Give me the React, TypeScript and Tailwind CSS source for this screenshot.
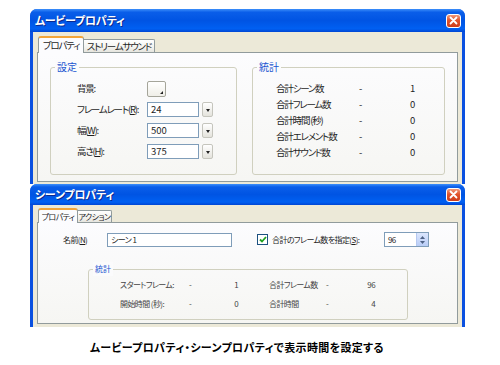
import React from 'react';

const ui = "font-['Noto_Sans_CJK_JP',sans-serif] [font-feature-settings:'palt'] whitespace-nowrap";

const TitleBar: React.FC<{ title: string; h: string }> = ({ title, h }) => (
  <div
    className={`${h} flex items-center justify-between pl-[5px] pr-[4px] bg-[linear-gradient(180deg,#3d8ffa_0%,#0a5ee9_14%,#0054e3_50%,#0060f2_86%,#0046d3_100%)]`}
  >
    <span className="text-white font-bold text-[11px] tracking-[-0.2px] leading-none [text-shadow:1px_1px_0_#0b2a8f]">{title}</span>
    <div className="w-[15px] h-[14px] rounded-[3px] border border-white bg-[linear-gradient(180deg,#f09a7a_0%,#e2542c_45%,#cc3c1a_100%)] flex items-center justify-center">
      <svg width="9" height="9" viewBox="0 0 9 9">
        <path d="M1.5 1.5 L7.5 7.5 M7.5 1.5 L1.5 7.5" stroke="#fff" strokeWidth="1.8" strokeLinecap="round" />
      </svg>
    </div>
  </div>
);

const Tab: React.FC<{ label: string; selected?: boolean; w: string; h: string }> = ({ label, selected, w, h }) =>
  selected ? (
    <div
      className={`${w} ${h} relative z-10 -mb-px border border-b-0 border-[#919b9c] border-t-2 border-t-[#f2a53a] rounded-t-[3px] bg-[#fcfcfe] flex items-center justify-center`}
    >
      {label}
    </div>
  ) : (
    <div
      className={`${w} ${h} border border-b-0 border-l-0 border-[#919b9c] rounded-tr-[2px] bg-[linear-gradient(180deg,#ffffff_0%,#f3f3ef_60%,#e6e5de_100%)] flex items-center justify-center`}
    >
      {label}
    </div>
  );

const Group: React.FC<{ title: string; className: string; titleSize: string; children: React.ReactNode }> = ({
  title,
  className,
  titleSize,
  children,
}) => (
  <div className={`relative border border-[#d0d0bf] rounded-[3px] ${className}`}>
    <span className={`absolute -top-[8px] left-[4px] px-[2px] bg-[#fbfbfc] text-[#1a55d0] leading-[14px] tracking-normal ${titleSize}`}>
      {title}
    </span>
    {children}
  </div>
);

const Dropdown: React.FC = () => (
  <div className="w-[11px] h-[15px] ml-[3px] border border-[#c5c5bd] rounded-[2px] bg-[linear-gradient(180deg,#ffffff,#e4e3dc)] flex items-end justify-center pb-[4px]">
    <svg width="4" height="3" viewBox="0 0 4 3">
      <path d="M0 0 H4 L2 3 Z" fill="#222" />
    </svg>
  </div>
);

const NumInput: React.FC<{ value: string }> = ({ value }) => (
  <div className="flex items-center">
    <div className="w-[52px] h-[15px] border border-[#7f9db9] bg-white pl-[3px] leading-[13px] tracking-normal">{value}</div>
    <Dropdown />
  </div>
);

const U: React.FC<{ c: string }> = ({ c }) => <span className="underline underline-offset-1">{c}</span>;

const App: React.FC = () => {
  const stats = [
    ['合計シーン数', '1'],
    ['合計フレーム数', '0'],
    ['合計時間 (秒)', '0'],
    ['合計エレメント数', '0'],
    ['合計サウンド数', '0'],
  ];

  return (
    <div className={`w-[500px] h-[365px] bg-white overflow-hidden text-[#1e1e1e] ${ui}`}>
      {/* ムービープロパティ */}
      <div className="ml-[30px] mt-[9px] w-[435px] h-[175px] rounded-t-[7px] overflow-hidden bg-[#0a50e0] flex flex-col">
        <TitleBar title="ムービープロパティ" h="h-[23px]" />
        <div className="flex-1 mx-[3px] bg-[#ece9d8] pt-[4px] px-[4px] flex flex-col text-[9.5px] tracking-[-1.2px]">
          <div className="flex items-end ml-[1px]">
            <Tab label="プロパティ" selected w="w-[46px]" h="h-[17px]" />
            <Tab label="ストリームサウンド" w="w-[71px]" h="h-[13px]" />
          </div>
          <div className="h-[130px] border border-[#919b9c] bg-[linear-gradient(180deg,#fcfcfe,#f6f6f3)] flex pt-[14px]">
            <Group title="設定" titleSize="text-[10px]" className="ml-[12px] w-[187px] h-[108px] pt-[10px]">
              {[
                ['背景:', null],
                [<>フレームレート(<U c="R" />):</>, '24'],
                [<>幅(<U c="W" />):</>, '500'],
                [<>高さ(<U c="H" />):</>, '375'],
              ].map(([label, val], i) => (
                <div key={i} className="h-[21px] flex items-center">
                  <div className="w-[96px] pl-[26px]">{label}</div>
                  {val === null ? (
                    <div className="w-[19px] h-[16px] border border-[#a5a59a] rounded-[2px] bg-[linear-gradient(180deg,#ffffff,#f0efe8)] flex items-end justify-end p-[2px]">
                      <svg width="3" height="3" viewBox="0 0 3 3">
                        <path d="M3 0 V3 H0 Z" fill="#222" />
                      </svg>
                    </div>
                  ) : (
                    <NumInput value={val as string} />
                  )}
                </div>
              ))}
            </Group>
            <Group title="統計" titleSize="text-[10px]" className="ml-[15px] w-[193px] h-[108px] pt-[12px]">
              {stats.map(([k, v]) => (
                <div key={k} className="h-[16px] flex items-center">
                  <div className="w-[106px] pl-[23px]">{k}</div>
                  <div className="w-[47px]">-</div>
                  <div className="w-[12px] text-center">{v}</div>
                </div>
              ))}
            </Group>
          </div>
        </div>
      </div>

      {/* シーンプロパティ */}
      <div className="ml-[30px] w-[435px] h-[143px] rounded-t-[7px] overflow-hidden bg-[#0a50e0] flex flex-col">
        <TitleBar title="シーンプロパティ" h="h-[21px]" />
        <div className="flex-1 mx-[3px] bg-[#ece9d8] pt-[3px] px-[4px] pb-[3px] flex flex-col text-[8px] tracking-[-0.6px]">
          <div className="flex items-end ml-[1px]">
            <Tab label="プロパティ" selected w="w-[40px]" h="h-[15px]" />
            <Tab label="アクション" w="w-[34px]" h="h-[12px]" />
          </div>
          <div className="flex-1 border border-[#919b9c] bg-[linear-gradient(180deg,#fcfcfe,#f6f6f3)] pt-[9px]">
            <div className="h-[15px] flex items-center">
              <div className="w-[69px] pl-[25px]">
                名前(<U c="N" />)
              </div>
              <div className="w-[125px] h-[14px] border border-[#7f9db9] bg-white pl-[3px] leading-[12px]">シーン 1</div>
              <div className="ml-[25px] w-[11px] h-[11px] border border-[#1c5180] bg-white flex items-center justify-center">
                <svg width="8" height="7" viewBox="0 0 8 7">
                  <path d="M1 3.5 L3 5.5 L7 1" stroke="#21a121" strokeWidth="1.8" fill="none" />
                </svg>
              </div>
              <div className="ml-[4px] w-[112px]">
                合計のフレーム数を指定(<U c="S" />):
              </div>
              <div className="w-[45px] h-[15px] border border-[#7f9db9] bg-white flex">
                <div className="flex-1 pl-[3px] leading-[13px]">96</div>
                <div className="w-[12px] bg-[linear-gradient(180deg,#dbe6fd,#b9cdf7)] border-l border-[#b5c8f0] flex flex-col items-center justify-center gap-[2px]">
                  <svg width="5" height="3" viewBox="0 0 5 3">
                    <path d="M0 3 H5 L2.5 0 Z" fill="#4d6185" />
                  </svg>
                  <svg width="5" height="3" viewBox="0 0 5 3">
                    <path d="M0 0 H5 L2.5 3 Z" fill="#4d6185" />
                  </svg>
                </div>
              </div>
            </div>
            <Group title="統計" titleSize="text-[8px]" className="mt-[22px] ml-[50px] w-[320px] h-[51px] pt-[5px] text-[#444]">
              {[
                ['スタートフレーム:', '1', '合計フレーム数', '96'],
                ['開始時間 (秒):', '0', '合計時間', '4'],
              ].map(([a, av, b, bv]) => (
                <div key={a} className="h-[19px] flex items-center">
                  <div className="w-[100px] pl-[31px]">{a}</div>
                  <div className="w-[38px]">-</div>
                  <div className="w-[11px] text-right">{av}</div>
                  <div className="w-[88px] pl-[31px]">{b}</div>
                  <div className="w-[37px]">-</div>
                  <div className="w-[12px] text-right">{bv}</div>
                </div>
              ))}
            </Group>
          </div>
        </div>
      </div>

      <div className="pl-[90px] pt-[13px] text-[11px] tracking-[0.35px] leading-[14px] font-bold text-black font-['Noto_Sans_CJK_JP',sans-serif]">
        ムービープロパティ・シーンプロパティで表示時間を設定する
      </div>
    </div>
  );
};

export default App;
